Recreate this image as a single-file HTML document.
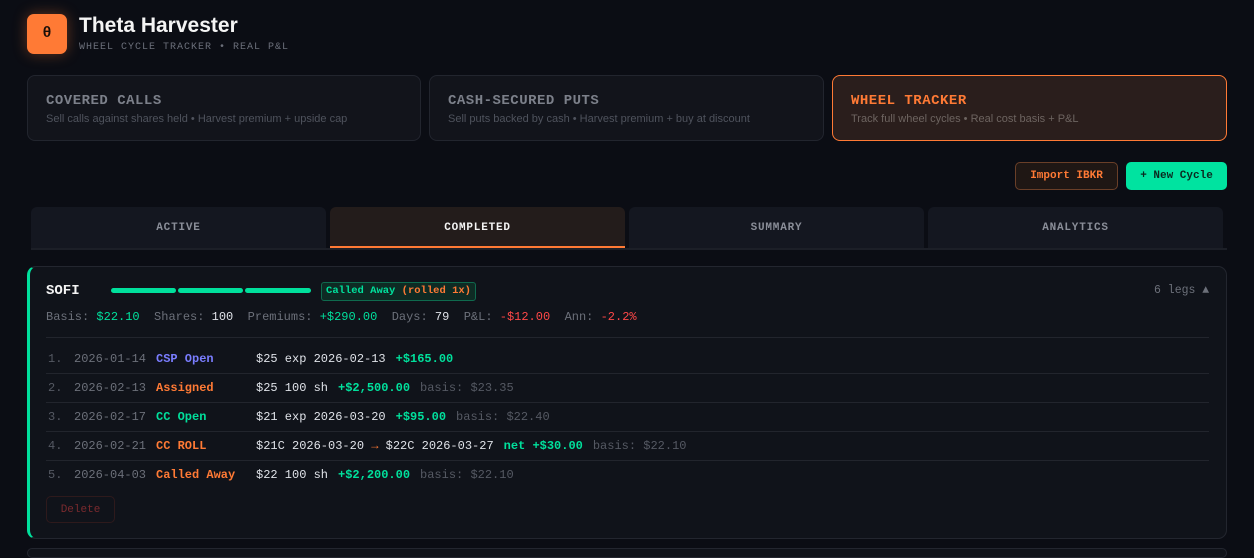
<!DOCTYPE html>
<html><head><meta charset="utf-8"><style>
*{margin:0;padding:0;box-sizing:border-box}
body{width:1254px;height:553px;background:#0b0d14;font-family:"Liberation Sans",sans-serif;position:relative;overflow:hidden;color:#e6e6e6}
.m{font-family:"Liberation Mono",monospace}
.a{position:absolute}
.logo{left:27px;top:14px;width:40px;height:40px;background:#ff7a35;border-radius:7px;box-shadow:0 0 14px rgba(255,122,53,.35);color:#1a0f08;font:bold 15px/40px "Liberation Mono",monospace;text-align:center}
.title{left:79px;top:14px;font-size:21px;font-weight:bold;color:#f4f4f4}
.sub{left:79px;top:42px;font-size:10px;letter-spacing:1px;color:#6b6f7a}
.mode{top:75px;height:66px;width:394px;border:1px solid #22252e;border-radius:8px;background:#12141b}
.mode h3{position:absolute;left:18px;top:17px;font:bold 14px "Liberation Mono",monospace;letter-spacing:.5px;color:#7c808a}
.mode p{position:absolute;left:18px;top:37px;font-size:11px;color:#4f535d}
.btn{top:162px;height:28px;border-radius:5px;font:bold 11px "Liberation Mono",monospace;display:flex;align-items:center;justify-content:center}
.tab{top:207px;height:41px;width:295px;background:#141720;border-radius:6px 6px 0 0;font:bold 11px "Liberation Mono",monospace;letter-spacing:.8px;color:#8a8e98;display:flex;align-items:center;justify-content:center}
.card{left:27px;top:266px;width:1200px;height:273px;border:1px solid #23262f;border-left:3px solid #00e09c;border-radius:9px;background:#10131a}
.row{position:absolute;left:46px;width:1163px;height:29px;border-bottom:1px solid #22252d;font-size:12px;font-family:"Liberation Mono",monospace;line-height:29px;white-space:pre}
.row span{position:absolute;top:0}
.row .t{font-weight:bold}
.row .det{position:absolute;top:0;left:210px;display:flex;gap:10px}
.row .det span{position:static}
.row .det .g{font-weight:bold}
.g{color:#00e09c}.o{color:#ff7a35}.b{color:#7a7dff}.gr{color:#6c707a}.w{color:#dfe2e8}.r{color:#ff4848}.d{color:#555963}
</style></head><body>
<div class="a logo">θ</div>
<div class="a title">Theta Harvester</div>
<div class="a sub m">WHEEL CYCLE TRACKER • REAL P&amp;L</div>

<div class="a mode" style="left:27px"><h3>COVERED CALLS</h3><p>Sell calls against shares held • Harvest premium + upside cap</p></div>
<div class="a mode" style="left:429px;width:395px"><h3>CASH-SECURED PUTS</h3><p>Sell puts backed by cash • Harvest premium + buy at discount</p></div>
<div class="a mode" style="left:832px;width:395px;background:#2a1e1c;border-color:#ff7a35"><h3 style="color:#ff7a35">WHEEL TRACKER</h3><p style="color:#6d6460">Track full wheel cycles • Real cost basis + P&amp;L</p></div>

<div class="a btn" style="left:1015px;width:103px;border:1px solid #6a3f28;background:#1f1714;color:#ff7a35">Import IBKR</div>
<div class="a btn" style="left:1126px;width:101px;background:#00e3a0;color:#0b2a20">+ New Cycle</div>

<div class="a" style="left:31px;top:248px;width:1196px;height:2px;background:#1c1f27"></div>
<div class="a tab" style="left:31px">ACTIVE</div>
<div class="a tab" style="left:330px;background:#231c1b;color:#f4f4f4;box-shadow:inset 0 -2px 0 #ff7a35">COMPLETED</div>
<div class="a tab" style="left:629px">SUMMARY</div>
<div class="a tab" style="left:928px">ANALYTICS</div>

<div class="a card"></div>
<div class="a m" style="left:46px;top:283px;font-size:14px;font-weight:bold;color:#f4f4f4">SOFI</div>
<div class="a" style="left:111px;top:288px;width:65px;height:5px;border-radius:3px;background:#00e09c"></div>
<div class="a" style="left:178px;top:288px;width:65px;height:5px;border-radius:3px;background:#00e09c"></div>
<div class="a" style="left:245px;top:288px;width:66px;height:5px;border-radius:3px;background:#00e09c"></div>
<div class="a m" style="left:321px;top:282px;width:155px;height:19px;border:1px solid #0f6a4e;background:#0e2b24;border-radius:3px;font-size:10.5px;font-weight:bold;line-height:17px;text-align:center;color:#00e09c;white-space:nowrap">Called Away <span class="o">(rolled 1x)</span></div>
<div class="a m gr" style="left:1154px;top:284px;font-size:11.5px">6 legs ▲</div>
<div class="a m" style="left:46px;top:310px;font-size:12px;white-space:pre"><span class="gr">Basis: </span><span class="g">$22.10</span>  <span class="gr">Shares: </span><span class="w">100</span>  <span class="gr">Premiums: </span><span class="g">+$290.00</span>  <span class="gr">Days: </span><span class="w">79</span>  <span class="gr">P&amp;L: </span><span class="r">-$12.00</span>  <span class="gr">Ann: </span><span class="r">-2.2%</span></div>
<div class="a" style="left:46px;top:337px;width:1163px;height:1px;background:#22252d"></div>

<div class="row" style="top:345px"><span class="d" style="left:2px">1.</span><span class="gr" style="left:28px">2026-01-14</span><span class="b t" style="left:110px">CSP Open</span><div class="det"><span class="w">$25 exp 2026-02-13</span><span class="g">+$165.00</span></div></div>
<div class="row" style="top:374px"><span class="d" style="left:2px">2.</span><span class="gr" style="left:28px">2026-02-13</span><span class="o t" style="left:110px">Assigned</span><div class="det"><span class="w">$25 100 sh</span><span class="g">+$2,500.00</span><span class="d">basis: $23.35</span></div></div>
<div class="row" style="top:403px"><span class="d" style="left:2px">3.</span><span class="gr" style="left:28px">2026-02-17</span><span class="g t" style="left:110px">CC Open</span><div class="det"><span class="w">$21 exp 2026-03-20</span><span class="g">+$95.00</span><span class="d">basis: $22.40</span></div></div>
<div class="row" style="top:432px"><span class="d" style="left:2px">4.</span><span class="gr" style="left:28px">2026-02-21</span><span class="o t" style="left:110px">CC ROLL</span><div class="det"><span class="w">$21C 2026-03-20 <span class="o">→</span> $22C 2026-03-27</span><span class="g">net +$30.00</span><span class="d">basis: $22.10</span></div></div>
<div class="row" style="top:461px;border:none"><span class="d" style="left:2px">5.</span><span class="gr" style="left:28px">2026-04-03</span><span class="o t" style="left:110px">Called Away</span><div class="det"><span class="w">$22 100 sh</span><span class="g">+$2,200.00</span><span class="d">basis: $22.10</span></div></div>

<div class="a m" style="left:46px;top:496px;width:69px;height:27px;border:1px solid #2e1a1c;border-radius:5px;font-size:11px;line-height:27px;text-align:center;color:#7a2a2e">Delete</div>
<div class="a" style="left:27px;top:548px;width:1200px;height:10px;border:1px solid #23262f;border-radius:9px;background:#10131a"></div>
</body></html>
